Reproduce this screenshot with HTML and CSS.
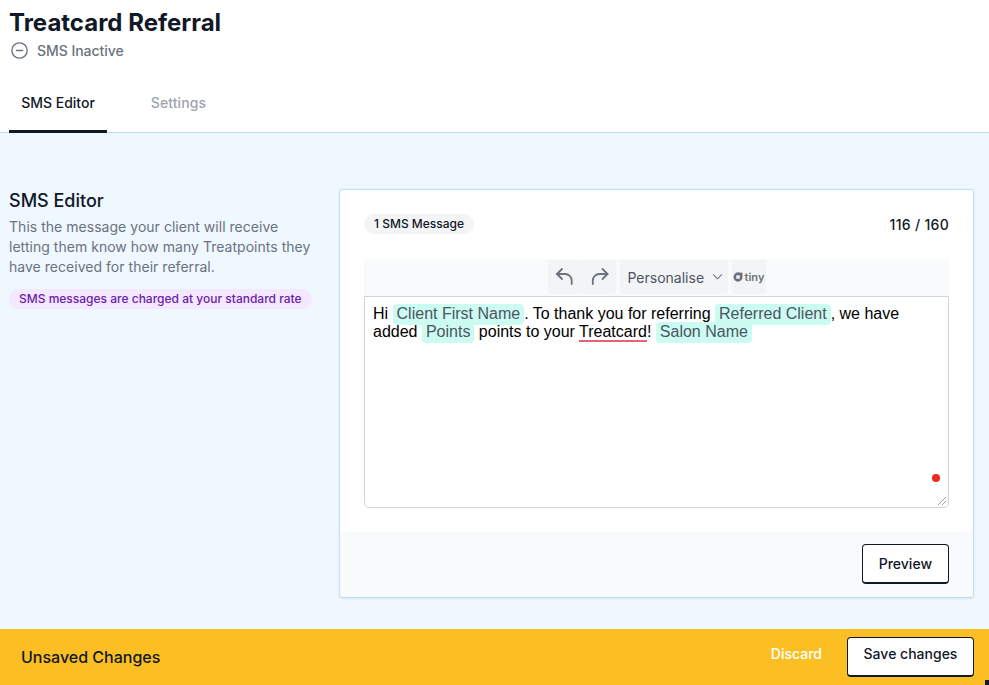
FILE: index.html
```html
<!DOCTYPE html>
<html lang="en">
<head>
<meta charset="utf-8">
<title>Treatcard Referral</title>
<link rel="stylesheet" href="styles.css">
</head>
<body>
<div class="page">
  <header class="head">
    <h1 class="title">Treatcard Referral</h1>
    <div class="status">
      <svg class="status-icon" viewBox="0 0 16 16" fill="none" stroke="currentColor" stroke-width="1.3" stroke-linecap="round"><circle cx="8" cy="8" r="7.2"/><path d="M5.2 8h5.6"/></svg>
      <span>SMS Inactive</span>
    </div>
  </header>
  <nav class="tabs">
    <a class="tab tab-active">SMS Editor</a>
    <a class="tab tab-muted">Settings</a>
  </nav>
  <main class="main">
    <section class="intro">
      <h2 class="intro-title">SMS Editor</h2>
      <p class="intro-text">This the message your client will receive letting them know how many Treatpoints they have received for their referral.</p>
      <span class="charge">SMS messages are charged at your standard rate</span>
    </section>
    <section class="card">
      <div class="card-body">
        <div class="card-top">
          <span class="count-pill">1 SMS Message</span>
          <span class="count">116 / 160</span>
        </div>
        <div class="toolbar">
          <button class="tool tool-undo" aria-label="Undo">
            <svg viewBox="0 0 24 24" fill="none" stroke="currentColor" stroke-width="1.8" stroke-linecap="round" stroke-linejoin="round"><path d="M9 4 4 9l5 5"/><path d="M4 9h8a6.6 6.6 0 0 1 6.7 6.5V19"/></svg>
          </button>
          <button class="tool tool-redo" aria-label="Redo">
            <svg viewBox="0 0 24 24" fill="none" stroke="currentColor" stroke-width="1.8" stroke-linecap="round" stroke-linejoin="round"><path d="m15.5 4 5 5-5 5"/><path d="M20.5 9h-8a6.6 6.6 0 0 0-6.7 6.5V19"/></svg>
          </button>
          <button class="tool tool-menu">Personalise
            <svg class="chev" viewBox="0 0 12 8" fill="none" stroke="currentColor" stroke-width="1.1" stroke-linecap="round" stroke-linejoin="round"><path d="m1.5 1.5 4.5 4.5 4.5-4.5"/></svg>
          </button>
          <div class="tool tool-tiny">
            <svg class="tiny-mark" viewBox="0 0 12 12"><path fill="currentColor" d="M7.5.6 11.4 1v5.2A5.3 5.3 0 0 1 6 11.6 5.4 5.4 0 0 1 .6 6.2 5.6 5.6 0 0 1 7.5.6Z"/><rect x="3.9" y="3.9" width="4.2" height="4.2" rx="1" fill="#f3f4f6"/></svg>
            <span>tiny</span>
          </div>
        </div>
        <div class="editor">
          <div class="editor-text">Hi <span class="tag">Client First Name</span>. To thank you for referring <span class="tag">Referred Client</span>, we have added <span class="tag">Points</span> points to your <span class="spell">Treatcard</span>! <span class="tag">Salon Name</span></div>
          <span class="dot"></span>
          <svg class="grip" viewBox="0 0 10 10" fill="none" stroke="#9ca3af" stroke-width="1"><path d="M9 1 1 9M9 5 5 9"/></svg>
        </div>
      </div>
      <div class="card-foot">
        <button class="btn">Preview</button>
      </div>
    </section>
  </main>
  <footer class="bar">
    <span class="bar-label">Unsaved Changes</span>
    <div class="bar-actions">
      <button class="discard">Discard</button>
      <button class="btn btn-save">Save changes</button>
    </div>
    <span class="corner-mark"></span>
  </footer>
</div>
</body>
</html>
```

FILE: styles.css
```css
* { box-sizing: border-box; }
html, body { margin: 0; padding: 0; height: 100%; overflow: hidden; }
body { font-family: Inter, "Liberation Sans", sans-serif; background: #fff; color: #111827; }
button { font-family: inherit; }
.page { display: flex; flex-direction: column; height: 685px; }

.head { padding: 9px 9px 0; height: 73px; flex: none; }
.title { margin: 0; font-size: 24px; line-height: 28px; font-weight: 700; color: #111827; }
.status { display: flex; align-items: center; gap: 9px; margin-top: 3px; height: 20px; font-size: 14px; font-weight: 500; color: #6b7280; letter-spacing: -0.05px; }
.status-icon { width: 17px; height: 17px; margin-left: 2px; }

.tabs { display: flex; height: 60px; flex: none; padding-left: 9px; border-bottom: 1px solid #bfdbfe; }
.tab { display: flex; align-items: center; justify-content: center; font-size: 14px; font-weight: 500; height: 60px; }
.tab-active { width: 98px; color: #111827; border-bottom: 3px solid #111827; padding-top: 1px; }
.tab-muted { width: 143px; color: #9ca3af; padding-bottom: 2px; letter-spacing: 0.1px; }

.main { flex: 1; min-height: 0; background: #eff7ff; display: flex; padding: 56px 15px 0 9px; }
.intro { width: 330px; flex: none; padding-top: 1px; }
.intro-title { margin: 0; font-size: 18px; line-height: 22px; font-weight: 500; color: #111827; }
.intro-text { margin: 5px 0 0; width: 310px; font-size: 14px; line-height: 20px; color: #6b7280; letter-spacing: 0.03px; }
.charge { display: inline-block; margin-top: 12px; height: 20px; line-height: 20px; padding: 0 10px; border-radius: 10px; background: #f3e8ff; color: #6b21a8; font-size: 12px; font-weight: 500; white-space: nowrap; }

.card { width: 635px; height: 409px; background: #fff; border: 1px solid #bfdbfe; border-radius: 3px; box-shadow: 0 1px 2px rgba(0,0,0,.08); display: flex; flex-direction: column; overflow: hidden; }
.card-body { flex: 1; padding: 24px 24px 24px; }
.card-top { display: flex; justify-content: space-between; align-items: center; height: 20px; }
.count-pill { height: 20px; line-height: 20px; padding: 0 10px; border-radius: 10px; background: #f3f4f6; font-size: 12px; font-weight: 500; color: #111827; }
.count { font-size: 14px; font-weight: 500; color: #111827; letter-spacing: 0.3px; }

.toolbar { margin-top: 25px; height: 37px; background: #f9fafb; display: flex; justify-content: center; padding: 1px 0 2px; }
.tool { border: 0; background: #f3f4f6; border-radius: 3px; color: #6b7280; display: flex; align-items: center; justify-content: center; padding: 0; }
.tool-undo, .tool-redo { width: 34px; height: 34px; }
.tool-undo svg, .tool-redo svg { width: 24px; height: 24px; }
.tool-menu { width: 108px; height: 34px; margin-left: 4px; margin-right: 4px; font-size: 14px; gap: 8px; color: #4b5563; justify-content: flex-start; padding-left: 8px; }
.chev { width: 11px; height: 8px; color: #6b7280; }
.tool-tiny { width: 34px; height: 34px; gap: 2px; font-size: 11px; font-weight: 600; color: #6b7280; }
.tiny-mark { width: 10px; height: 10px; }

.editor { position: relative; height: 212px; border: 1px solid #d1d5db; border-radius: 0 0 5px 5px; padding: 8px; background: #fff; }
.editor-text { font-family: "Liberation Sans", Arial, sans-serif; font-size: 16px; line-height: 18px; color: #000; }
.tag { background: #ccfbf1; color: #4b5563; border-radius: 4px; padding: 1px 4px 3px; }
.spell { border-bottom: 2px solid #ec5f78; }
.dot { position: absolute; right: 8px; bottom: 25px; width: 8px; height: 8px; border-radius: 50%; background: #ee2a1e; }
.grip { position: absolute; right: 1px; bottom: 1px; width: 10px; height: 10px; }

.card-foot { height: 66px; flex: none; background: #f9fafb; display: flex; justify-content: flex-end; align-items: flex-start; padding: 12px 24px 0 0; }
.btn { height: 40px; background: #fff; border: 1px solid #111827; border-bottom-width: 2px; border-radius: 4px; font-size: 14px; font-weight: 500; color: #111827; padding: 0 16px; cursor: pointer; }
.btn-save { width: 127px; padding: 0 0 5px; }

.bar { position: relative; height: 56px; flex: none; background: #fbbf24; display: flex; align-items: center; justify-content: space-between; padding: 0 15px 0 21px; }
.bar-label { font-size: 16px; font-weight: 500; color: #111827; }
.bar-actions { display: flex; align-items: center; gap: 25px; margin-top: -1px; }
.discard { border: 0; background: none; padding: 0 0 7px; color: #fff; font-size: 14px; font-weight: 500; cursor: pointer; }
.corner-mark { position: absolute; right: 0; bottom: 0; width: 4px; height: 5px; background: #111827; }
```
